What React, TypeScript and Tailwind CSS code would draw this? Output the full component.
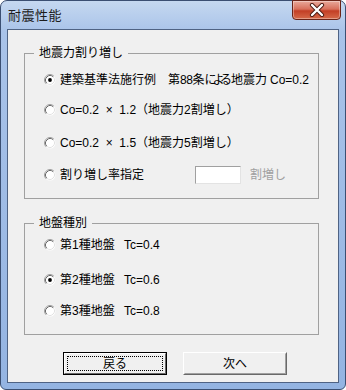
import React from "react";

const FONT = { fontFamily: '"Liberation Sans", "Noto Sans CJK JP", sans-serif' };

function Radio({ checked }: { checked?: boolean }) {
  return (
    <svg width="12" height="12" viewBox="0 0 12 12" className="shrink-0">
      <circle cx="6" cy="6" r="5.5" fill="#ffffff" />
      <path d="M2.11 9.89 A5.5 5.5 0 0 1 9.89 2.11" stroke="#a0a0a0" strokeWidth="1" fill="none" />
      <path d="M2.82 9.18 A4.5 4.5 0 0 1 9.18 2.82" stroke="#696969" strokeWidth="1" fill="none" />
      <path d="M9.18 2.82 A4.5 4.5 0 0 1 2.82 9.18" stroke="#e3e3e3" strokeWidth="1" fill="none" />
      {checked && <circle cx="6" cy="6" r="1.9" fill="#000000" />}
    </svg>
  );
}

function Row({ checked, children, className = "" }: { checked?: boolean; children: React.ReactNode; className?: string }) {
  return (
    <div className={"flex items-center h-[18px] pl-[19px] " + className}>
      <Radio checked={checked} />
      <div className="ml-[4px] flex items-center whitespace-pre text-[12px] leading-none text-black">{children}</div>
    </div>
  );
}

function Group({ label, className = "", children }: { label: string; className?: string; children: React.ReactNode }) {
  return (
    <div className={"relative ml-[16px] w-[295px] border border-[#a0a0a0] " + className}>
      <div className="absolute -top-[8px] left-[9px] bg-[#f0f0f0] px-[5px] text-[12px] leading-[14px] text-black">
        {label}
      </div>
      {children}
    </div>
  );
}

export default function App() {
  return (
    <div className="w-[346px] h-[390px] bg-white" style={FONT}>
      <div className="relative flex h-full w-full flex-col rounded-t-[7px] rounded-b-[6px] border border-[#3b4f72] bg-[linear-gradient(180deg,#c5d8f0_0%,#a9c3e9_8%,#94b4e2_100%)] px-[6px] pt-[28px] pb-[6px]">
        <div className="absolute left-[7px] top-[7px] text-[13px] leading-[14px] tracking-[0.5px] text-[#1c1c1c]" style={{ fontFamily: '"Noto Sans CJK JP", sans-serif' }}>
          耐震性能
        </div>
        <div className="absolute right-[4px] top-[-1px] flex h-[20px] w-[49px] items-center justify-center rounded-b-[4px] border border-[#6a2418] bg-[linear-gradient(180deg,#e9a99b_0%,#d8705c_45%,#c33f25_55%,#d66a4a_100%)] shadow-[inset_0_0_0_1px_rgba(255,255,255,0.35)]">
          <svg width="16" height="14" viewBox="0 0 16 14">
            <path d="M3 2 L13 12 M13 2 L3 12" stroke="#4a1a12" strokeWidth="4.2" strokeLinecap="round" />
            <path d="M3 2 L13 12 M13 2 L3 12" stroke="#ffffff" strokeWidth="2.4" strokeLinecap="round" />
          </svg>
        </div>

        <div className="flex flex-1 flex-col border border-[#4f6384] bg-[#f0f0f0]">
          <Group label="地震力割り増し" className="mt-[23px] pt-[17px] pb-[14px]">
            <Row checked>
              <span className="inline-block w-[108px]">建築基準法施行例</span>
              <span className="inline-flex w-[102px]">
                <span>第</span>
                <span className="tracking-[-0.5px]">88</span>
                <span>条</span>
                <span className="tracking-[-4px]">による</span>
                <span className="ml-[3px]">地震力</span>
              </span>
              <span>Co=0.2</span>
            </Row>
            <Row className="mt-[12px]">
              <span>{"Co=0.2  ×  1.2（地震力2割増し）"}</span>
            </Row>
            <Row className="mt-[15px]">
              <span>{"Co=0.2  ×  1.5（地震力5割増し）"}</span>
            </Row>
            <Row className="mt-[14px]">
              <span className="inline-block w-[135px]">割り増し率指定</span>
              <span className="inline-block h-[18px] w-[46px] border border-t-[#a0a0a0] border-l-[#a0a0a0] border-r-[#e3e3e3] border-b-[#e3e3e3] bg-white" />
              <span className="ml-[9px] text-[#a0a0a0]">割増し</span>
            </Row>
          </Group>

          <Group label="地盤種別" className="mt-[24px] pt-[12px] pb-[14px]">
            <Row>
              <span className="inline-block w-[64px]">第1種地盤</span>
              <span>Tc=0.4</span>
            </Row>
            <Row checked className="mt-[17px]">
              <span className="inline-block w-[64px]">第2種地盤</span>
              <span>Tc=0.6</span>
            </Row>
            <Row className="mt-[13px]">
              <span className="inline-block w-[64px]">第3種地盤</span>
              <span>Tc=0.8</span>
            </Row>
          </Group>

          <div className="mt-[17px] flex pl-[55px]">
            <div className="h-[23px] w-[104px] border border-black">
              <div className="flex h-full w-full items-center justify-center border border-t-white border-l-white border-r-[#696969] border-b-[#696969] bg-[#f0f0f0] p-[2px]">
                <div className="flex h-full w-full items-center justify-center border border-dotted border-black text-[12px] leading-none text-black">
                  戻る
                </div>
              </div>
            </div>
            <div className="ml-[16px] h-[23px] w-[104px] border border-t-white border-l-white border-r-[#696969] border-b-[#696969]">
              <div className="flex h-full w-full items-center justify-center border border-t-[#f0f0f0] border-l-[#f0f0f0] border-r-[#a0a0a0] border-b-[#a0a0a0] bg-[#f0f0f0] text-[12px] leading-none text-black">
                次へ
              </div>
            </div>
          </div>
        </div>
      </div>
    </div>
  );
}
